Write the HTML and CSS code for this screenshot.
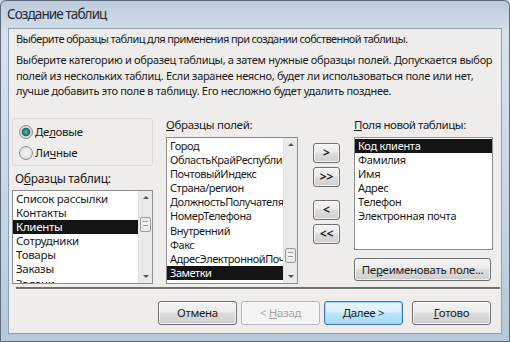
FILE: index.html
```html
<!DOCTYPE html>
<html lang="ru">
<head>
  <meta charset="UTF-8">
  <title>Создание таблиц</title>
  <link rel="stylesheet" href="styles.css">
</head>
<body>
  <div class="window">
    <div class="titlebar">Создание таблиц</div>

    <div class="client">
      <p class="intro">Выберите образцы таблиц для применения при создании собственной таблицы.</p>
      <p class="desc">Выберите категорию и образец таблицы, а затем нужные образцы полей. Допускается выбор<br>полей из нескольких таблиц. Если заранее неясно, будет ли использоваться поле или нет,<br>лучше добавить это поле в таблицу. Его несложно будет удалить позднее.</p>

      <div class="main">
        <div class="col col-tables">
          <div class="groupbox">
            <label class="radio"><span class="dot checked"></span><span>Де<u>л</u>овые</span></label>
            <label class="radio"><span class="dot"></span><span>Ли<u>ч</u>ные</span></label>
          </div>
          <div class="caption">О<u>б</u>разцы таблиц:</div>
          <div class="listbox list-tables">
            <div class="items">
              <div class="item">Список рассылки</div>
              <div class="item">Контакты</div>
              <div class="item selected">Клиенты</div>
              <div class="item">Сотрудники</div>
              <div class="item">Товары</div>
              <div class="item">Заказы</div>
              <div class="item">Задачи</div>
            </div>
            <div class="scrollbar">
              <div class="arrow up"></div>
              <div class="track"><div class="thumb thumb-top"></div></div>
              <div class="arrow down"></div>
            </div>
          </div>
        </div>

        <div class="col col-fields">
          <div class="caption"><u>О</u>бразцы полей:</div>
          <div class="listbox list-fields">
            <div class="items">
              <div class="item">Город</div>
              <div class="item">ОбластьКрайРеспублика</div>
              <div class="item">ПочтовыйИндекс</div>
              <div class="item">Страна/регион</div>
              <div class="item">ДолжностьПолучателя</div>
              <div class="item">НомерТелефона</div>
              <div class="item">Внутренний</div>
              <div class="item">Факс</div>
              <div class="item">АдресЭлектроннойПочты</div>
              <div class="item selected">Заметки</div>
            </div>
            <div class="scrollbar">
              <div class="arrow up"></div>
              <div class="track"><div class="thumb thumb-bottom"></div></div>
              <div class="arrow down"></div>
            </div>
          </div>
        </div>

        <div class="col col-arrows">
          <button class="btn small">&gt;</button>
          <button class="btn small">&gt;&gt;</button>
          <button class="btn small gap-top">&lt;</button>
          <button class="btn small">&lt;&lt;</button>
        </div>

        <div class="col col-new">
          <div class="caption"><u>П</u>оля новой таблицы:</div>
          <div class="listbox list-new">
            <div class="items">
              <div class="item selected">Код клиента</div>
              <div class="item">Фамилия</div>
              <div class="item">Имя</div>
              <div class="item">Адрес</div>
              <div class="item">Телефон</div>
              <div class="item">Электронная почта</div>
            </div>
          </div>
          <button class="btn rename">Пе<u>р</u>еименовать поле...</button>
        </div>
      </div>

      <div class="separator"></div>

      <div class="footer">
        <button class="btn wide">Отмена</button>
        <button class="btn wide" disabled>&lt; <u>Н</u>азад</button>
        <button class="btn wide default"><u>Д</u>алее &gt;</button>
        <button class="btn wide last"><u>Г</u>отово</button>
      </div>
    </div>
  </div>
</body>
</html>
```

FILE: styles.css
```css
* {
  box-sizing: border-box;
}
html, body {
  margin: 0;
  padding: 0;
}
body {
  font-family: "Noto Sans", "Open Sans", sans-serif;
  font-size: 11px;
  letter-spacing: -0.3px;
  color: #1a1a1a;
  background: #c9d6e3;
}
.window {
  width: 510px;
  height: 342px;
  padding: 0 7px 7px 7px;
  background: linear-gradient(180deg, #bccadb 0%, #d7e2ec 10%, #c8d6e4 60%, #b7c8da 100%);
  border: 1px solid #5d6b7a;
  border-radius: 6px 6px 0 0;
  display: flex;
  flex-direction: column;
}
.titlebar {
  height: 27px;
  padding: 4px 0 0 0;
  margin-left: -1px;
  font-size: 13.5px;
  letter-spacing: -0.9px;
  color: #1e2a36;
}
.client {
  flex: 1;
  background: #eeedeb;
  border: 1px solid #8f9eae;
  padding: 0 0 0 7px;
  display: flex;
  flex-direction: column;
}
p {
  margin: 0;
  white-space: nowrap;
}
.intro {
  line-height: 15px;
  margin-top: 2px;
  letter-spacing: -0.6px;
}
.desc {
  line-height: 15.5px;
  margin-top: 6px;
}
.main {
  display: flex;
  margin-top: 19px;
  height: 166px;
}
.col {
  display: flex;
  flex-direction: column;
}
.col-tables {
  width: 141px;
  margin-left: -4px;
}
.groupbox {
  height: 48px;
  flex: none;
  border: 1px solid #dcdbd8;
  border-radius: 3px;
  padding: 5px 0 0 6px;
  display: flex;
  flex-direction: column;
  gap: 5px;
}
.radio {
  display: flex;
  align-items: center;
  gap: 2px;
  font-size: 11.5px;
  height: 16px;
}
.dot {
  width: 14px;
  height: 14px;
  border-radius: 50%;
  border: 1px solid #8e8f8f;
  background: radial-gradient(circle, #f4f4f4 0%, #d8d8d8 100%);
  display: inline-block;
}
.dot.checked {
  background: radial-gradient(circle, #6bb6a8 0%, #1e6b63 45%, #d8d8d8 55%, #f0f0f0 100%);
}
.caption {
  line-height: 15px;
  font-size: 11.5px;
  flex: none;
}
.col-tables .caption {
  margin: 5px 0 4px 3px;
  font-size: 12px;
}
.listbox {
  background: #fff;
  border: 1px solid #8c8c8c;
  display: flex;
  overflow: hidden;
  flex: none;
}
.items {
  flex: 1;
  overflow: hidden;
  padding-top: 1px;
}
.item {
  height: 14.2px;
  line-height: 14px;
  padding-left: 3px;
  white-space: nowrap;
  overflow: hidden;
}
.item.selected {
  background: #141414;
  color: #fff;
}
.list-tables {
  height: 94px;
}
.list-tables .item {
  font-size: 11.5px;
}
.list-fields .item {
  letter-spacing: -0.45px;
}
.scrollbar {
  width: 14px;
  background: #eaeaea;
  border-left: 1px solid #e2e2e2;
  display: flex;
  flex-direction: column;
}
.arrow {
  height: 14px;
  position: relative;
}
.arrow::after {
  content: "";
  position: absolute;
  left: 4px;
  border-left: 3px solid transparent;
  border-right: 3px solid transparent;
}
.arrow.up::after {
  top: 5px;
  border-bottom: 3px solid #555;
}
.arrow.down::after {
  top: 6px;
  border-top: 3px solid #555;
}
.track {
  flex: 1;
  display: flex;
  flex-direction: column;
}
.thumb {
  height: 15px;
  margin: 0 1px;
  border: 1px solid #9a9a9a;
  border-radius: 2px;
  background: repeating-linear-gradient(180deg, #f2f2f2 0 3px, #9a9a9a 3px 4px);
  background-clip: content-box;
  padding: 3px 2px;
  background-color: #f2f2f2;
}
.thumb-top {
  margin-top: 12px;
}
.thumb-bottom {
  margin-top: auto;
  margin-bottom: 6px;
}
.col-fields {
  width: 132px;
  margin-left: 13px;
}
.col-fields .caption,
.col-new .caption {
  height: 19px;
  line-height: 13px;
}
.col-new .caption {
  letter-spacing: -0.45px;
}
.list-fields {
  height: 147px;
}
.col-arrows {
  width: 27px;
  margin-left: 15px;
  padding-top: 25px;
  gap: 4px;
}
.btn {
  font-family: inherit;
  font-size: 11.5px;
  letter-spacing: -0.3px;
  color: #1c1c1c;
  border: 1px solid #707070;
  border-radius: 3px;
  background: linear-gradient(180deg, #f4f4f4 0%, #ebebeb 45%, #dddddd 50%, #cfcfcf 100%);
  padding: 0;
  box-shadow: inset 0 0 0 1px rgba(255, 255, 255, 0.7);
}
.btn.small {
  height: 20px;
  width: 27px;
  font-weight: bold;
  font-size: 12px;
  letter-spacing: 0;
  flex: none;
}
.btn.gap-top {
  margin-top: 9px;
}
.col-new {
  width: 139px;
  margin-left: 14px;
}
.list-new {
  height: 113px;
}
.btn.rename {
  margin-top: 8px;
  height: 23px;
  width: 137px;
  font-size: 11.5px;
  flex: none;
}
.separator {
  margin: 3px 0 0 0;
  height: 3px;
  width: 484px;
  border-top: 2px solid #6e6e6e;
  border-bottom: 1px solid #fbfbfb;
}
.footer {
  display: flex;
  margin-top: 11px;
  padding-left: 142px;
  gap: 4px;
}
.btn.wide {
  width: 79px;
  height: 24px;
}
.btn.wide:disabled {
  color: #a3a3a3;
  border-color: #b5b5b5;
  background: #f4f4f4;
}
.btn.default {
  border-color: #3d7bad;
  box-shadow: inset 0 0 0 1px #9cd4f0;
  background: linear-gradient(180deg, #eaf6fd 0%, #d9f0fc 45%, #bee6fd 50%, #a7d9f5 100%);
}
.btn.last {
  margin-left: 5px;
}
```
